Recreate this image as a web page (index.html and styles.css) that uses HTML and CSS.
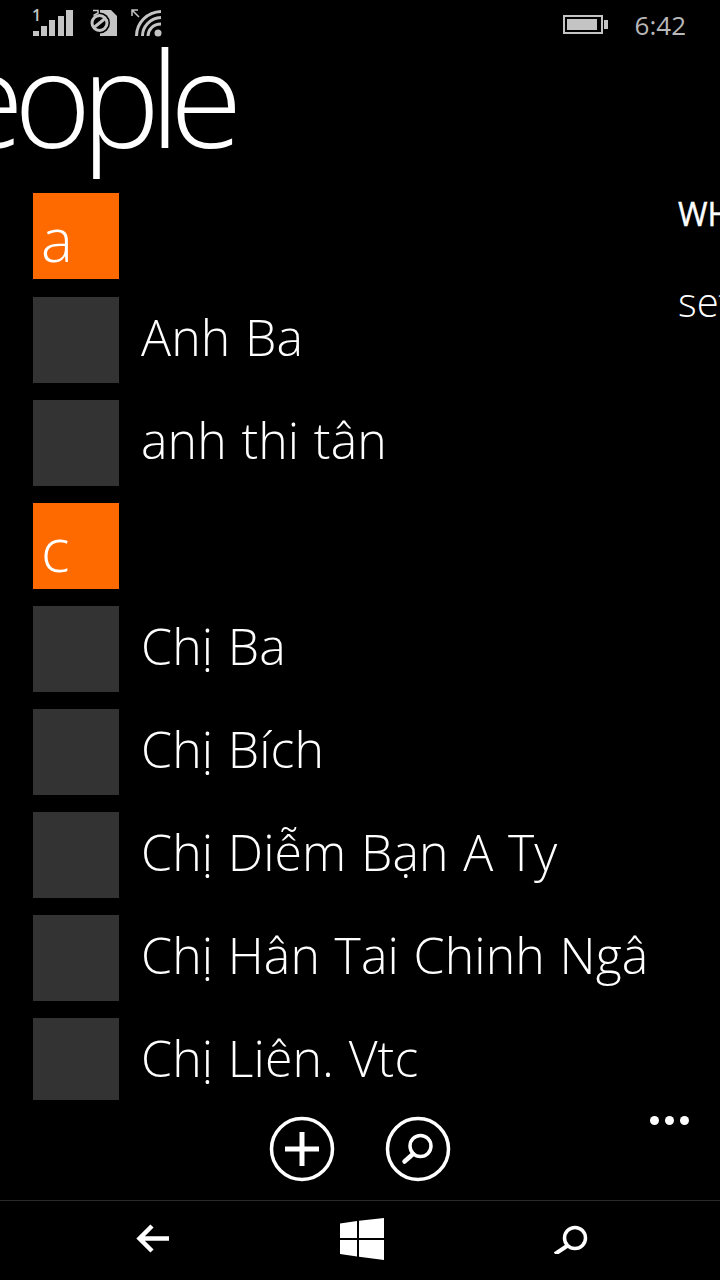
FILE: index.html
```html
<!DOCTYPE html>
<html lang="vi">
<head>
<meta charset="utf-8">
<title>people</title>
<link rel="stylesheet" href="styles.css">
</head>
<body>
<div class="phone">
  <div class="status">
    <div class="status-left">
      <svg class="ic-signal" width="42" height="30" viewBox="0 0 42 30"><text x="0" y="11.500" class="sim">1</text><rect x="1" y="22" width="6" height="5" fill="#c4c4c4"/><rect x="9" y="17" width="6" height="10" fill="#c4c4c4"/><rect x="17" y="11" width="6" height="16" fill="#c4c4c4"/><rect x="26" y="7" width="6" height="20" fill="#c4c4c4"/><rect x="34" y="1" width="7" height="26" fill="#c4c4c4"/></svg>
      <svg class="ic-sim" width="30" height="30" viewBox="0 0 30 30"><path fill="#c4c4c4" d="M12 1h11l6 6v20H12z"/><circle cx="11.500" cy="14" r="10.500" fill="#000"/><circle cx="11.500" cy="14" r="7.500" fill="none" stroke="#c4c4c4" stroke-width="3"/><path d="M6.500 18l10-8" stroke="#c4c4c4" stroke-width="3"/><path d="M5 1.500h5v2.500L5.500 6.500" fill="none" stroke="#c4c4c4" stroke-width="1.500"/></svg>
      <svg class="ic-wifi" width="32" height="30" viewBox="0 0 32 30"><path d="M8 8L1.500 1.500M1 7V1h6" fill="none" stroke="#c4c4c4" stroke-width="1.500"/><g fill="none" stroke="#c4c4c4" stroke-width="3"><path d="M5.500 27C5.500 14 16 3 30 2.500"/><path d="M11.500 27C11.500 18 19 9 30 8.500"/><path d="M17 27C17 21 22 15 30 15"/></g><circle cx="27" cy="24" r="3.500" fill="#c4c4c4"/></svg>
    </div>
    <div class="status-right">
      <svg width="46" height="20" viewBox="0 0 46 20"><rect x="1" y="1" width="38" height="17" fill="none" stroke="#c4c4c4" stroke-width="2"/><rect x="4" y="4" width="30" height="11" fill="#c4c4c4"/><rect x="41" y="5" width="4" height="9" fill="#c4c4c4"/></svg>
      <span class="clock">6:42</span>
    </div>
  </div>

  <h1 class="title">people</h1>

  <div class="pivot">
    <ul class="list">
      <li class="row"><span class="tile tile-letter">a</span></li>
      <li class="row"><span class="tile"></span><span class="name">Anh Ba</span></li>
      <li class="row"><span class="tile"></span><span class="name">anh thi tân</span></li>
      <li class="row"><span class="tile tile-letter">c</span></li>
      <li class="row"><span class="tile"></span><span class="name">Chị Ba</span></li>
      <li class="row"><span class="tile"></span><span class="name">Chị Bích</span></li>
      <li class="row"><span class="tile"></span><span class="name">Chị Diễm Bạn A Ty</span></li>
      <li class="row"><span class="tile"></span><span class="name">Chị Hân Tai Chinh Ngâ</span></li>
      <li class="row"><span class="tile"></span><span class="name">Chị Liên. Vtc</span></li>
    </ul>
    <div class="peek">
      <div class="peek-head">WHAT'S NEW</div>
      <div class="peek-text">set up</div>
    </div>
  </div>

  <div class="appbar">
    <svg class="round" width="66" height="66" viewBox="0 0 66 66"><circle cx="33" cy="33" r="30.500" fill="none" stroke="#fff" stroke-width="3.500"/><path d="M33 16v34M16 33h34" stroke="#fff" stroke-width="5" fill="none"/></svg>
    <svg class="round" width="66" height="66" viewBox="0 0 66 66"><circle cx="33" cy="33" r="30.500" fill="none" stroke="#fff" stroke-width="3.500"/><circle cx="35.500" cy="30" r="10.500" fill="none" stroke="#fff" stroke-width="3.500"/><path d="M28 38L19.500 45.500" stroke="#fff" stroke-width="4.500" stroke-linecap="round" fill="none"/></svg>
    <div class="dots"><i></i><i></i><i></i></div>
  </div>

  <div class="nav">
    <svg width="34" height="30" viewBox="0 0 34 30"><path d="M33 14.500H4M16 2L3.500 14.500 16 27" fill="none" stroke="#fff" stroke-width="4.500"/></svg>
    <svg width="44" height="42" viewBox="0 0 44 42"><path fill="#fff" d="M0 5.500l17-2.500V20H0zM19 2.800L44 0v20H19zM0 22h17v16.500L0 36zM19 22h25v20l-25-3.200z"/></svg>
    <svg width="36" height="30" viewBox="0 0 36 30"><circle cx="21" cy="14" r="10.500" fill="none" stroke="#fff" stroke-width="3.500"/><path d="M13 22L1 30" stroke="#fff" stroke-width="4" fill="none"/></svg>
  </div>
</div>
</body>
</html>
```

FILE: styles.css
```css
* { box-sizing: border-box; }
html, body { margin: 0; padding: 0; background: #000; }
body { font-family: "Open Sans", "Noto Sans", sans-serif; color: #fff; }
.phone { width: 720px; height: 1280px; overflow: hidden; display: flex; flex-direction: column; background: #000; }

.status { height: 40px; flex: none; display: flex; justify-content: space-between; align-items: flex-start; padding: 9px 34px 0 32px; }
.status-left { display: flex; gap: 14px; }
.ic-wifi { margin-left: -1px; }
.status-right { display: flex; gap: 26px; align-items: flex-start; margin-top: 6px; }
.sim { fill: #c4c4c4; font-family: "Open Sans", sans-serif; font-size: 16px; font-weight: 600; }
.clock { font-size: 26px; font-weight: 400; color: #b8b8b8; line-height: 20px; }

.title { flex: none; height: 153px; margin: 0 0 0 -117px; font-size: 132px; font-weight: 300; line-height: 115px; letter-spacing: -10px; white-space: nowrap; }

.pivot { flex: none; height: 907px; display: flex; overflow: hidden; }
.list { flex: none; width: 678px; margin: 0; padding: 0 0 0 33px; list-style: none; display: flex; flex-direction: column; gap: 17px; }
.row { flex: none; display: flex; align-items: center; height: 86px; gap: 22px; }
.row:first-child { margin-bottom: 1px; }
.tile { flex: none; width: 86px; height: 86px; background: #333; display: flex; align-items: flex-end; padding: 0 0 7px 8px; }
.tile-letter { background: #ff6a00; font-size: 60px; font-weight: 300; line-height: 66px; }
.name { font-size: 50px; font-weight: 300; line-height: 60px; white-space: nowrap; letter-spacing: 0.100px; word-spacing: 1.500px; margin-top: -6px; }

.peek { flex: none; white-space: nowrap; }
.peek-head { font-size: 32px; font-weight: 400; -webkit-text-stroke: 0.4px #fff; line-height: 40px; margin-top: 1px; }
.peek-text { font-size: 40px; font-weight: 300; line-height: 50px; margin-top: 43px; }

.appbar { flex: none; height: 100px; position: relative; display: flex; justify-content: center; gap: 50px; padding: 16px 0 0 0; }
.dots { position: absolute; right: 31px; top: 16px; display: flex; gap: 6px; }
.dots i { display: block; width: 9px; height: 9px; border-radius: 50%; background: #fff; }

.nav { flex: none; height: 80px; border-top: 1px solid #2a2a2a; display: flex; justify-content: space-between; align-items: center; padding: 0 130px 4px 136px; }
```
